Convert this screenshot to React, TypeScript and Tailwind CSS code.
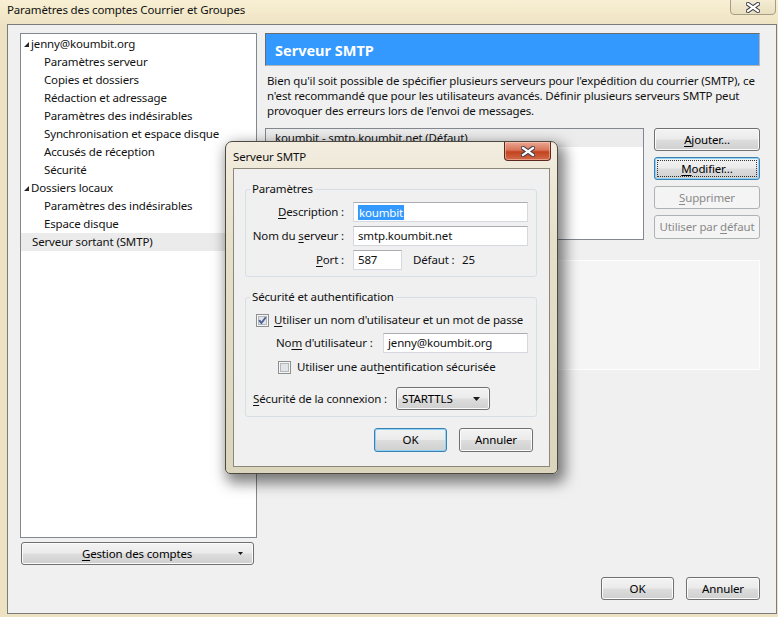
import React from "react";

function U({ children }: { children: React.ReactNode }) {
  return <span className="underline underline-offset-[2px] decoration-[1px]">{children}</span>;
}

function CloseX({ w = 11, h = 8 }: { w?: number; h?: number }) {
  return (
    <svg width={w + 4} height={h + 4} viewBox={`0 0 ${w + 4} ${h + 4}`}>
      <path d={`M2 2 L${w + 2} ${h + 2} M${w + 2} 2 L2 ${h + 2}`} stroke="#3b3b46" strokeWidth="4.2" strokeLinecap="square" fill="none" />
      <path d={`M2 2 L${w + 2} ${h + 2} M${w + 2} 2 L2 ${h + 2}`} stroke="#ffffff" strokeWidth="2.2" strokeLinecap="square" fill="none" />
    </svg>
  );
}

function DownTri({ w = 7, h = 4 }: { w?: number; h?: number }) {
  return (
    <svg width={w} height={h} viewBox={`0 0 ${w} ${h}`}>
      <polygon points={`0,0 ${w},0 ${w / 2},${h}`} fill="#1a1a1a" />
    </svg>
  );
}

function ExpandTri() {
  return (
    <svg width="7" height="7" viewBox="0 0 7 7">
      <polygon points="6,1 6,6 1,6" fill="#262626" />
    </svg>
  );
}

function Checkbox({ checked }: { checked?: boolean }) {
  return (
    <svg width="13" height="13" viewBox="0 0 13 13" className="shrink-0">
      <rect x="0.5" y="0.5" width="12" height="12" fill="#f6f6f6" stroke="#8e8f8f" />
      <rect x="2.5" y="2.5" width="8" height="8" fill="#e2e4e7" stroke="#b3b8bd" />
      {checked && <path d="M3.2 6.2 L5.4 9 L9.8 3.2" fill="none" stroke="#4a5f97" strokeWidth="1.9" />}
    </svg>
  );
}

const BTN =
  "flex items-center justify-center rounded-[3px] border border-[#707070] bg-[linear-gradient(to_bottom,#f3f3f3_0%,#ebebeb_48%,#dddddd_52%,#cfcfcf_100%)] shadow-[inset_0_0_0_1px_#fbfbfb] text-black";
const BTN_FOCUS =
  "flex items-center justify-center rounded-[3px] border border-[#3c7fb1] bg-[linear-gradient(to_bottom,#f3f3f3_0%,#ebebeb_48%,#dddddd_52%,#cfcfcf_100%)] shadow-[inset_0_0_0_1px_#8fd3f7] text-black";
const BTN_DIS =
  "flex items-center justify-center rounded-[3px] border border-[#adb2b5] bg-[#f4f4f4] text-[#8a8a8a]";

const INPUT =
  "flex h-[20px] items-center border border-[#d5d8de] border-t-[#abadb3] bg-white pl-[4px] whitespace-nowrap";

export default function App() {
  const subItems1 = [
    "Paramètres serveur",
    "Copies et dossiers",
    "Rédaction et adressage",
    "Paramètres des indésirables",
    "Synchronisation et espace disque",
    "Accusés de réception",
    "Sécurité",
  ];
  const subItems2 = ["Paramètres des indésirables", "Espace disque"];

  return (
    <div className="relative h-[617px] w-[778px] overflow-hidden bg-[#ede3c3] font-['Noto_Sans',sans-serif] text-[11.5px] leading-[16px] tracking-[-0.15px] text-[#111]">
      {/* Title bar */}
      <div className="flex h-[24px] items-start bg-[linear-gradient(to_bottom,#f8efd4,#efe4c3)]">
        <div className="pl-[7px] pt-[2px] whitespace-nowrap">Paramètres des comptes Courrier et Groupes</div>
        <div className="ml-auto mr-[2px] mt-[-1px] flex h-[16px] w-[46px] items-center justify-center rounded-b-[4px] border border-[#a59e86] bg-[linear-gradient(to_bottom,#f4ecd3,#e9dfbf)]">
          <CloseX w={10} h={7} />
        </div>
      </div>

      {/* Client area */}
      <div className="ml-[7px] flex h-[590px] w-[770px] flex-col border border-[#7b7b7b] bg-[#f0f0f0] pl-[12px] pr-[16px] pt-[8px]">
        <div className="flex h-[532px]">
          {/* Left column */}
          <div className="flex w-[237px] flex-col">
            <div className="h-[506px] border border-[#828790] bg-white pt-[1px]">
              <div className="flex h-[18px] items-center pl-[2px]">
                <ExpandTri />
                <span className="ml-[1px] whitespace-nowrap">jenny@koumbit.org</span>
              </div>
              {subItems1.map((t) => (
                <div key={t} className="flex h-[18px] items-center pl-[23px] whitespace-nowrap">
                  {t}
                </div>
              ))}
              <div className="flex h-[18px] items-center pl-[2px]">
                <ExpandTri />
                <span className="ml-[1px] whitespace-nowrap">Dossiers locaux</span>
              </div>
              {subItems2.map((t) => (
                <div key={t + "2"} className="flex h-[18px] items-center pl-[23px] whitespace-nowrap">
                  {t}
                </div>
              ))}
              <div className="flex h-[18px] items-center bg-[#ebebeb] pl-[11px] whitespace-nowrap">
                Serveur sortant (SMTP)
              </div>
            </div>
            <div className={`ml-[1px] mt-[4px] h-[23px] w-[233px] ${BTN}`}>
              <span className="flex-1 pl-[14px] text-center whitespace-nowrap">
                <U>G</U>estion des comptes
              </span>
              <span className="flex pr-[10px]">
                <DownTri w={5} h={3} />
              </span>
            </div>
          </div>

          {/* Right column */}
          <div className="ml-[8px] flex w-[495px] flex-col">
            <div className="flex h-[33px] items-center border border-[#6c6c6c] border-b-[#b5b5b5] border-r-[#b5b5b5] bg-[#3399ff] pl-[9px] text-[14.5px] font-bold tracking-[0px] text-white">
              Serveur SMTP
            </div>
            <div className="mt-[7px] pl-[2px] leading-[15px] whitespace-nowrap">
              Bien qu'il soit possible de spécifier plusieurs serveurs pour l'expédition du courrier (SMTP), ce
              <br />
              n'est recommandé que pour les utilisateurs avancés. Définir plusieurs serveurs SMTP peut
              <br />
              provoquer des erreurs lors de l'envoi de messages.
            </div>
            <div className="mt-[10px] flex">
              <div className="h-[112px] w-[379px] border border-[#828790] bg-white">
                <div className="flex h-[18px] items-center bg-[#ececec] pl-[9px] whitespace-nowrap">
                  koumbit - smtp.koumbit.net (Défaut)
                </div>
              </div>
              <div className="ml-[10px] flex w-[106px] flex-col gap-[6px]">
                <div className={`h-[23px] ${BTN}`}>
                  <span>
                    <U>A</U>jouter...
                  </span>
                </div>
                <div className={`h-[23px] p-[2px] ${BTN_FOCUS}`}>
                  <span className="flex h-full w-full items-center justify-center border border-dotted border-[#333]">
                    <span>
                      <U>M</U>odifier...
                    </span>
                  </span>
                </div>
                <div className={`h-[23px] ${BTN_DIS}`}>
                  <span>
                    <U>S</U>upprimer
                  </span>
                </div>
                <div className={`h-[24px] ${BTN_DIS}`}>
                  <span className="whitespace-nowrap">
                    Utiliser par <U>d</U>éfaut
                  </span>
                </div>
              </div>
            </div>
            <div className="mt-[20px] h-[110px] border border-[#fdfdfd] bg-[#f5f5f5]" />
          </div>
        </div>

        {/* Bottom buttons */}
        <div className="mt-[12px] flex justify-end gap-[12px]">
          <div className={`h-[23px] w-[73px] ${BTN}`}>OK</div>
          <div className={`h-[23px] w-[74px] ${BTN}`}>Annuler</div>
        </div>
      </div>

      {/* Modal dialog */}
      <div className="absolute left-[225px] top-[141px] flex h-[333px] w-[333px] flex-col rounded-t-[7px] rounded-b-[5px] border border-[#4e4a42] bg-[linear-gradient(to_bottom,#f2eddf_0%,#e6e0cb_30%,#dcd5bd_100%)] shadow-[4px_6px_14px_3px_rgba(0,0,0,0.5)]">
        <div className="flex h-[26px] items-start">
          <div className="pl-[7px] pt-[7px] whitespace-nowrap">Serveur SMTP</div>
          <div className="ml-auto mr-[6px] flex h-[19px] w-[47px] items-center justify-center rounded-b-[4px] border border-t-0 border-[#5a2a20] bg-[linear-gradient(to_bottom,#eba892_0%,#d9745a_45%,#c2431f_55%,#d26a4a_100%)] shadow-[inset_0_0_0_1px_rgba(255,210,190,0.5)]">
            <CloseX w={10} h={7} />
          </div>
        </div>
        <div className="mx-[7px] flex h-[299px] flex-col border border-[#8c8776] bg-[#f0f0f0] pl-[11px] pr-[12px] pt-[12px]">
          {/* Group 1 */}
          <fieldset className="rounded-[3px] border border-[#d5dfe5]">
            <legend className="ml-[4px] px-[2px] leading-[16px]">Paramètres</legend>
            <div className="grid grid-cols-[100px_175px] gap-x-[7px] gap-y-[4px] pb-[6px] pt-[5px]">
              <div className="flex h-[20px] items-center justify-end pr-[2px] whitespace-nowrap">
                <span>
                  <U>D</U>escription :
                </span>
              </div>
              <div className={`${INPUT} border-[#7eb4ea] border-t-[#569de5]`}>
                <span className="bg-[#3399ff] px-[1px] leading-[15px] text-white">koumbit</span>
              </div>
              <div className="flex h-[20px] items-center justify-end pr-[2px] whitespace-nowrap">
                <span>
                  Nom du <U>s</U>erveur :
                </span>
              </div>
              <div className={INPUT}>smtp.koumbit.net</div>
              <div className="flex h-[20px] items-center justify-end pr-[2px] whitespace-nowrap">
                <span>
                  <U>P</U>ort :
                </span>
              </div>
              <div className="flex items-center">
                <div className={`${INPUT} w-[49px]`}>587</div>
                <span className="ml-[11px] w-[49px] whitespace-nowrap">Défaut :</span>
                <span>25</span>
              </div>
            </div>
          </fieldset>

          {/* Group 2 */}
          <fieldset className="mt-[12px] rounded-[3px] border border-[#d5dfe5]">
            <legend className="ml-[4px] px-[2px] leading-[16px]">Sécurité et authentification</legend>
            <div className="flex flex-col pb-[6px] pt-[7px]">
              <div className="flex h-[16px] items-center gap-[5px] pl-[10px] whitespace-nowrap">
                <Checkbox checked />
                <span>
                  <U>U</U>tiliser un nom d'utilisateur et un mot de passe
                </span>
              </div>
              <div className="mt-[5px] flex items-center">
                <span className="w-[137px] pl-[30px] whitespace-nowrap">
                  No<U>m</U> d'utilisateur :
                </span>
                <div className={`${INPUT} w-[145px]`}>jenny@koumbit.org</div>
              </div>
              <div className="mt-[6px] flex h-[16px] items-center gap-[6px] pl-[32px] whitespace-nowrap">
                <Checkbox />
                <span>
                  Utiliser une aut<U>h</U>entification sécurisée
                </span>
              </div>
              <div className="mt-[12px] flex items-center">
                <span className="w-[150px] pl-[7px] whitespace-nowrap">
                  <U>S</U>écurité de la connexion :
                </span>
                <div className={`h-[23px] w-[94px] justify-between! pl-[5px] pr-[9px] ${BTN}`}>
                  <span>STARTTLS</span>
                  <DownTri w={7} h={4} />
                </div>
              </div>
            </div>
          </fieldset>

          <div className="mt-[11px] flex justify-end gap-[12px] pr-[4px]">
            <div className={`h-[24px] w-[73px] ${BTN_FOCUS}`}>OK</div>
            <div className={`h-[24px] w-[74px] ${BTN}`}>Annuler</div>
          </div>
        </div>
      </div>
    </div>
  );
}
